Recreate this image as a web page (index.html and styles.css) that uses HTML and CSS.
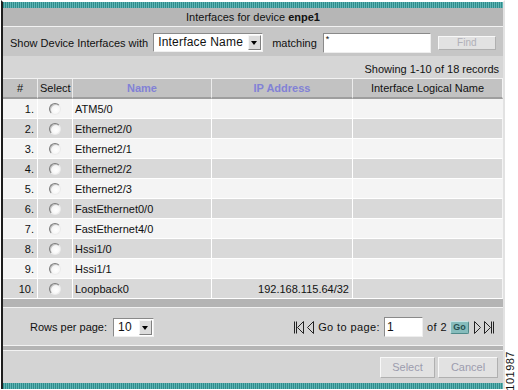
FILE: index.html
```html
<!DOCTYPE html>
<html lang="en">
<head>
    <meta charset="UTF-8">
    <title>Interfaces for device enpe1</title>
    <link rel="stylesheet" href="styles.css">
</head>
<body>

    <div class="frame">
        <div class="stripe"></div>

        <!-- Title -->
        <div class="title">Interfaces for device <b>enpe1</b></div>

        <!-- Search -->
        <div class="search">
            <span class="label">Show Device Interfaces with</span>
            <span class="combo combo-wide">
                <span class="combo-val">Interface Name</span>
                <span class="combo-btn"></span>
            </span>
            <span class="label matching">matching</span>
            <span class="field field-search">*</span>
            <span class="btn btn-find">Find</span>
        </div>

        <div class="records">Showing 1-10 of 18 records</div>

        <!-- Interface table -->
        <table class="grid">
            <colgroup>
                <col class="c-num">
                <col class="c-sel">
                <col class="c-name">
                <col class="c-ip">
                <col class="c-log">
            </colgroup>
            <thead>
                <tr>
                    <th>#</th>
                    <th class="th-left">Select</th>
                    <th class="sortable">Name</th>
                    <th class="sortable">IP Address</th>
                    <th>Interface Logical Name</th>
                </tr>
            </thead>
            <tbody>
                <tr class="odd"><td class="num">1.</td><td class="sel"><span class="radio"></span></td><td class="name">ATM5/0</td><td class="ip"></td><td></td></tr>
                <tr class="even"><td class="num">2.</td><td class="sel"><span class="radio"></span></td><td class="name">Ethernet2/0</td><td class="ip"></td><td></td></tr>
                <tr class="odd"><td class="num">3.</td><td class="sel"><span class="radio"></span></td><td class="name">Ethernet2/1</td><td class="ip"></td><td></td></tr>
                <tr class="even"><td class="num">4.</td><td class="sel"><span class="radio"></span></td><td class="name">Ethernet2/2</td><td class="ip"></td><td></td></tr>
                <tr class="odd"><td class="num">5.</td><td class="sel"><span class="radio"></span></td><td class="name">Ethernet2/3</td><td class="ip"></td><td></td></tr>
                <tr class="even"><td class="num">6.</td><td class="sel"><span class="radio"></span></td><td class="name">FastEthernet0/0</td><td class="ip"></td><td></td></tr>
                <tr class="odd"><td class="num">7.</td><td class="sel"><span class="radio"></span></td><td class="name">FastEthernet4/0</td><td class="ip"></td><td></td></tr>
                <tr class="even"><td class="num">8.</td><td class="sel"><span class="radio"></span></td><td class="name">Hssi1/0</td><td class="ip"></td><td></td></tr>
                <tr class="odd"><td class="num">9.</td><td class="sel"><span class="radio"></span></td><td class="name">Hssi1/1</td><td class="ip"></td><td></td></tr>
                <tr class="even"><td class="num">10.</td><td class="sel"><span class="radio"></span></td><td class="name">Loopback0</td><td class="ip">192.168.115.64/32</td><td></td></tr>
            </tbody>
        </table>

        <div class="bar bar-tall"></div>

        <!-- Paging -->
        <div class="pager">
            <div class="rows">
                <span class="label">Rows per page:</span>
                <span class="combo combo-small">
                    <span class="combo-val">10</span>
                    <span class="combo-btn"></span>
                </span>
            </div>
            <div class="nav">
                <svg class="nav-icon" width="11" height="13" viewBox="0 0 11 13">
                    <path d="M1.5 0.5v12M3.5 0.5v12" stroke="#222" fill="none"/>
                    <path d="M10.5 0.5 L4.5 6.5 L10.5 12.5 Z" stroke="#222" fill="none"/>
                </svg>
                <svg class="nav-icon" width="7" height="13" viewBox="0 0 7 13">
                    <path d="M6.5 0.5 L0.5 6.5 L6.5 12.5 Z" stroke="#222" fill="none"/>
                </svg>
                <span class="label goto">Go to page:</span>
                <span class="field field-page">1</span>
                <span class="label">of 2</span>
                <span class="go">Go</span>
                <svg class="nav-icon" width="7" height="13" viewBox="0 0 7 13">
                    <path d="M0.5 0.5 L6.5 6.5 L0.5 12.5 Z" stroke="#222" fill="none"/>
                </svg>
                <svg class="nav-icon" width="11" height="13" viewBox="0 0 11 13">
                    <path d="M0.5 0.5 L6.5 6.5 L0.5 12.5 Z" stroke="#222" fill="none"/>
                    <path d="M7.5 0.5v12M9.5 0.5v12" stroke="#222" fill="none"/>
                </svg>
            </div>
        </div>

        <div class="bar bar-thin"></div>

        <!-- Actions -->
        <div class="actions">
            <span class="btn btn-action">Select</span>
            <span class="btn btn-action btn-cancel">Cancel</span>
        </div>

        <div class="stripe"></div>
    </div>

    <div class="figno">101987</div>

</body>
</html>
```

FILE: styles.css
```css
/* Reset default styles */
* {
    box-sizing: border-box;
    margin: 0;
    padding: 0;
}

body {
    font-family: 'Liberation Sans', Arial, sans-serif;
    font-size: 11px;
    color: #111;
    background: #fff;
    position: relative;
    width: 518px;
    height: 390px;
    overflow: hidden;
}

/* Outer frame */
.frame {
    width: 504px;
    margin-left: 1px;
    border-left: 2px solid #1e1e1e;
    border-right: 2px solid #e2e2e2;
    border-top: 2px solid #fff;
    background: #d4d4d4;
}

.stripe {
    height: 6px;
    background: repeating-linear-gradient(to right, #2f8c8c 0, #2f8c8c 1px, #5fb4b4 1px, #5fb4b4 2px);
}

/* Title */
.title {
    height: 19px;
    line-height: 18px;
    text-align: center;
    background: #b6b6b6;
    border-bottom: 1px solid #f2f2f2;
}

.title b {
    font-weight: bold;
}

/* Search row */
.search {
    height: 29px;
    display: flex;
    align-items: center;
    padding-left: 7px;
    padding-top: 2px;
    background: #c6c6c6;
}

.label {
    white-space: nowrap;
}

.matching {
    margin-left: 9px;
}

.combo {
    display: inline-flex;
    align-items: stretch;
    height: 19px;
    background: #fff;
    border: 1px solid;
    border-color: #8a8a8a #f0f0f0 #f0f0f0 #8a8a8a;
    font-size: 12px;
    white-space: nowrap;
    overflow: hidden;
}

.combo-wide {
    width: 110px;
    margin-left: 5px;
}

.combo-small {
    width: 41px;
    margin-left: 6px;
}

.combo-val {
    flex: 1;
    line-height: 17px;
    padding-left: 4px;
    letter-spacing: 0.2px;
}

.combo-btn {
    flex: none;
    width: 13px;
    margin: 1px;
    background: #dcdcdc;
    border: 1px solid;
    border-color: #f6f6f6 #808080 #808080 #f6f6f6;
    position: relative;
}

.combo-btn::after {
    content: "";
    position: absolute;
    left: 2px;
    top: 5px;
    border-left: 3.5px solid transparent;
    border-right: 3.5px solid transparent;
    border-top: 4px solid #000;
}

.field {
    display: inline-block;
    height: 20px;
    background: #fff;
    border: 1px solid;
    border-color: #8a8a8a #eeeeee #eeeeee #8a8a8a;
    font-size: 12px;
    line-height: 18px;
    padding-left: 2px;
}

.field-search {
    width: 108px;
    margin-left: 6px;
    font-size: 9px;
    line-height: 11px;
}

.field-page {
    width: 39px;
    margin: 0 4px;
}

/* Buttons */
.btn {
    display: inline-block;
    text-align: center;
    color: #9c9cae;
    background: #e2e2e2;
    border: 1px solid;
    border-color: #f8f8f8 #b0b0b0 #b0b0b0 #f8f8f8;
}

.btn-find {
    width: 58px;
    height: 14px;
    line-height: 12px;
    font-size: 10px;
    margin-left: 7px;
    color: #b0b0b8;
}

.btn-action {
    width: 55px;
    height: 21px;
    line-height: 19px;
}

.btn-cancel {
    width: 60px;
    margin-left: 3px;
}

/* Records row */
.records {
    height: 23px;
    line-height: 26px;
    text-align: right;
    padding-right: 4px;
    background: #d6d6d6;
    border-bottom: 1px solid #f2f2f2;
}

/* Grid */
.grid {
    width: 500px;
    table-layout: fixed;
    border-collapse: separate;
    border-spacing: 0;
}

.c-num { width: 35px; }
.c-sel { width: 35px; }
.c-name { width: 139px; }
.c-ip { width: 141px; }
.c-log { width: 150px; }

.grid th {
    height: 20px;
    font-weight: normal;
    background: #c2c2c2;
    border-right: 1px solid #ececec;
    border-bottom: 2px solid #9e9e9e;
    text-align: center;
    padding: 0;
}

.grid th.th-left {
    text-align: left;
    padding-left: 2px;
}

.grid th.sortable {
    color: #8181d6;
    font-weight: bold;
}

.grid th:last-child,
.grid td:last-child {
    border-right: 1px solid #f4f4f4;
}

.grid td {
    height: 20px;
    padding: 0;
    border-right: 1px solid #fff;
    border-bottom: 1px solid #fff;
    white-space: nowrap;
}

.grid tr.odd td {
    background: #f4f4f4;
}

.grid tr.even td {
    background: #d9d9d9;
}

.grid td.num {
    text-align: right;
    padding-right: 3px;
}

.grid td.sel {
    text-align: center;
}

.grid td.name {
    padding-left: 2px;
}

.grid td.ip {
    text-align: right;
    padding-right: 3px;
}

.radio {
    display: inline-block;
    width: 12px;
    height: 12px;
    border-radius: 50%;
    border: 1px solid;
    border-color: #7c7c7c #ececec #ececec #7c7c7c;
    background: radial-gradient(circle at 60% 60%, #fff 0, #f6f6f6 50%, #d8d8d8 100%);
    box-shadow: inset 1px 1px 0 #c4c4c4;
    vertical-align: middle;
    margin-top: -2px;
}

/* Separators */
.bar {
    background: #b4b4b4;
    border-bottom: 1px solid #f2f2f2;
}

.bar-tall {
    height: 9px;
}

.bar-thin {
    height: 6px;
    border-top: 1px solid #f2f2f2;
}

/* Pager */
.pager {
    height: 37px;
    display: flex;
    align-items: center;
    justify-content: space-between;
    padding: 1px 8px 0 27px;
    background: #d4d4d4;
}

.rows,
.nav {
    display: flex;
    align-items: center;
}

.nav .label {
    letter-spacing: 0.4px;
}

.nav-icon {
    display: block;
    margin-left: 3px;
}

.goto {
    margin-left: 4px;
}

.go {
    display: inline-block;
    width: 19px;
    height: 13px;
    margin: 0 2px 0 3px;
    font-size: 9px;
    font-weight: bold;
    line-height: 11px;
    text-align: center;
    color: #264f4f;
    background: #86bcbc;
    border: 1px solid;
    border-color: #c8e4e4 #4f8a8a #4f8a8a #c8e4e4;
    border-radius: 2px;
}

/* Actions */
.actions {
    height: 32px;
    display: flex;
    align-items: center;
    justify-content: flex-end;
    padding-right: 5px;
    background: #d4d4d4;
}

/* Figure number */
.figno {
    position: absolute;
    left: 504px;
    top: 351px;
    writing-mode: vertical-rl;
    transform: rotate(180deg);
    font-size: 11px;
    line-height: 12px;
    letter-spacing: 0.5px;
}
```
